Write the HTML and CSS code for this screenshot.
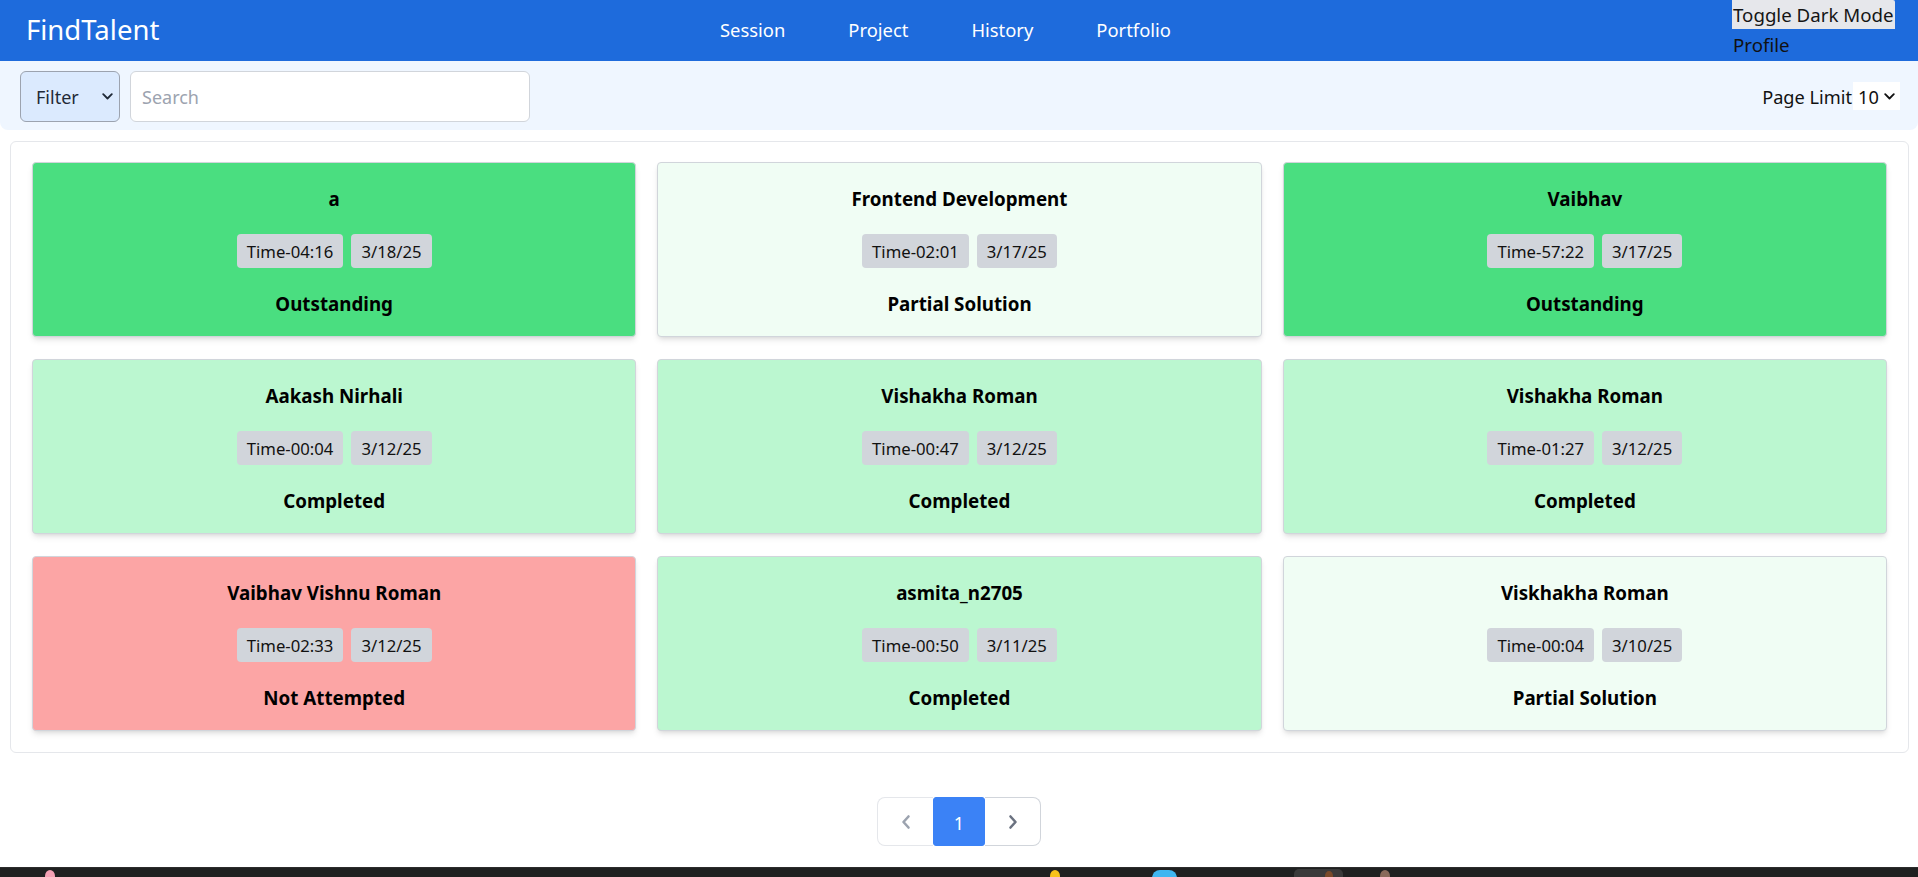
FILE: index.html
```html
<!DOCTYPE html>
<html lang="en">
<head>
<meta charset="utf-8">
<title>FindTalent</title>
<link rel="stylesheet" href="styles.css">
</head>
<body>
<header class="topbar">
  <div class="brand">FindTalent</div>
  <nav class="nav">
    <a class="nav-link" href="#">Session</a>
    <a class="nav-link" href="#">Project</a>
    <a class="nav-link" href="#">History</a>
    <a class="nav-link" href="#">Portfolio</a>
  </nav>
  <div class="account">
    <button class="theme-toggle" type="button">Toggle Dark Mode</button>
    <a class="profile" href="#">Profile</a>
  </div>
</header>

<section class="toolbar">
  <div class="search-group">
    <button class="filter" type="button">
      <span>Filter</span>
      <svg class="chev" width="11" height="7" viewBox="0 0 11 7"><path d="M1.2 1.2 L5.5 5.5 L9.8 1.2" fill="none" stroke="#1f2937" stroke-width="1.8" stroke-linecap="round" stroke-linejoin="round"/></svg>
    </button>
    <input class="search" type="text" placeholder="Search">
  </div>
  <div class="limit">
    <span class="limit-label">Page Limit</span>
    <button class="limit-select" type="button">
      <span>10</span>
      <svg class="chev" width="11" height="7" viewBox="0 0 11 7"><path d="M1.2 1.2 L5.5 5.5 L9.8 1.2" fill="none" stroke="#111" stroke-width="1.8" stroke-linecap="round" stroke-linejoin="round"/></svg>
    </button>
  </div>
</section>

<main class="board">
  <article class="card card-top">
    <h3 class="card-name">a</h3>
    <div class="tags"><span class="tag">Time-04:16</span><span class="tag">3/18/25</span></div>
    <p class="card-status">Outstanding</p>
  </article>
  <article class="card card-partial">
    <h3 class="card-name">Frontend Development</h3>
    <div class="tags"><span class="tag">Time-02:01</span><span class="tag">3/17/25</span></div>
    <p class="card-status">Partial Solution</p>
  </article>
  <article class="card card-top">
    <h3 class="card-name">Vaibhav</h3>
    <div class="tags"><span class="tag">Time-57:22</span><span class="tag">3/17/25</span></div>
    <p class="card-status">Outstanding</p>
  </article>

  <article class="card card-done">
    <h3 class="card-name">Aakash Nirhali</h3>
    <div class="tags"><span class="tag">Time-00:04</span><span class="tag">3/12/25</span></div>
    <p class="card-status">Completed</p>
  </article>
  <article class="card card-done">
    <h3 class="card-name">Vishakha Roman</h3>
    <div class="tags"><span class="tag">Time-00:47</span><span class="tag">3/12/25</span></div>
    <p class="card-status">Completed</p>
  </article>
  <article class="card card-done">
    <h3 class="card-name">Vishakha Roman</h3>
    <div class="tags"><span class="tag">Time-01:27</span><span class="tag">3/12/25</span></div>
    <p class="card-status">Completed</p>
  </article>

  <article class="card card-fail">
    <h3 class="card-name">Vaibhav Vishnu Roman</h3>
    <div class="tags"><span class="tag">Time-02:33</span><span class="tag">3/12/25</span></div>
    <p class="card-status">Not Attempted</p>
  </article>
  <article class="card card-done">
    <h3 class="card-name">asmita_n2705</h3>
    <div class="tags"><span class="tag">Time-00:50</span><span class="tag">3/11/25</span></div>
    <p class="card-status">Completed</p>
  </article>
  <article class="card card-partial">
    <h3 class="card-name">Viskhakha Roman</h3>
    <div class="tags"><span class="tag">Time-00:04</span><span class="tag">3/10/25</span></div>
    <p class="card-status">Partial Solution</p>
  </article>
</main>

<nav class="pager-wrap">
  <div class="pager">
    <button class="pg pg-prev" type="button" disabled>
      <svg width="12" height="16" viewBox="0 0 12 16"><path d="M8.5 2.5 L3.5 8 L8.5 13.5" fill="none" stroke="#9ca3af" stroke-width="2.6" stroke-linecap="round" stroke-linejoin="round"/></svg>
    </button>
    <button class="pg pg-active" type="button">1</button>
    <button class="pg pg-next" type="button">
      <svg width="12" height="16" viewBox="0 0 12 16"><path d="M3.5 2.5 L8.5 8 L3.5 13.5" fill="none" stroke="#6b7280" stroke-width="2.6" stroke-linecap="round" stroke-linejoin="round"/></svg>
    </button>
  </div>
</nav>

<div class="taskbar">
  <span class="tb-icon tb-pink"></span>
  <span class="tb-icon tb-yellow"></span>
  <span class="tb-icon tb-blue"></span>
  <span class="tb-icon tb-active"><span class="tb-brown"></span></span>
  <span class="tb-icon tb-tan"></span>
</div>
</body>
</html>
```
FILE: styles.css
```css
* { box-sizing: border-box; }

html, body {
  margin: 0;
  padding: 0;
  background: #ffffff;
  font-family: "Noto Sans", "Open Sans", sans-serif;
  color: #111111;
}

/* ---------- header ---------- */
.topbar {
  height: 61px;
  background: #1e6bdc;
  display: flex;
  align-items: center;
  padding: 0 23px 0 26px;
}
.brand {
  font-size: 27.5px;
  line-height: 36px;
  color: #ffffff;
  width: 133px;
  white-space: nowrap;
  margin-top: -1px;
}
.nav {
  display: flex;
  gap: 63px;
  margin-left: 561px;
  margin-top: -2px;
}
.nav-link {
  font-size: 18.4px;
  line-height: 26px;
  color: #ffffff;
  text-decoration: none;
  white-space: nowrap;
}
.account {
  margin-left: auto;
  align-self: flex-start;
  display: flex;
  flex-direction: column;
  align-items: flex-start;
}
.theme-toggle {
  font-family: inherit;
  font-size: 18.7px;
  line-height: 29px;
  height: 29px;
  padding: 0 1px;
  border: 0;
  border-radius: 0 2px 0 0;
  background: #e6e7eb;
  color: #151515;
  white-space: nowrap;
  width: 163px;
  text-align: left;
}
.profile {
  font-size: 18.7px;
  line-height: 30px;
  padding-top: 1px;
  color: #111111;
  text-decoration: none;
  padding-left: 1px;
}

/* ---------- toolbar ---------- */
.toolbar {
  height: 69px;
  background: #eff6ff;
  border-radius: 0 0 8px 8px;
  display: flex;
  align-items: center;
  justify-content: space-between;
  padding: 0 18px 0 20px;
}
.search-group {
  display: flex;
  align-items: center;
  gap: 10px;
  margin-top: 1px;
}
.filter {
  width: 100px;
  height: 51px;
  display: flex;
  align-items: center;
  justify-content: space-between;
  padding: 2px 6px 0 15px;
  background: #dbeafe;
  border: 1px solid #9ca3af;
  border-radius: 6px;
  font-family: inherit;
  font-size: 18px;
  color: #1f2937;
}
.filter .chev { margin-top: -1px; }
.search {
  width: 400px;
  height: 51px;
  padding: 2px 11px 0;
  border: 1px solid #d1d5db;
  border-radius: 6px;
  background: #ffffff;
  font-family: inherit;
  font-size: 18px;
  color: #111;
  outline: none;
}
.search::placeholder { color: #9ca3af; }
.limit {
  display: flex;
  align-items: center;
  margin-top: 1px;
}
.limit-label {
  font-size: 18.2px;
  line-height: 26px;
  padding-top: 1px;
  color: #111111;
  white-space: nowrap;
}
.limit-select {
  width: 47px;
  height: 28px;
  margin-left: 1px;
  display: flex;
  align-items: center;
  justify-content: space-between;
  padding: 1px 5px 0 5px;
  background: #ffffff;
  border: 0;
  font-family: inherit;
  font-size: 18.2px;
  color: #111111;
}

/* ---------- cards ---------- */
.board {
  margin: 11px 9px 0 10px;
  padding: 20px 21px 21px 21px;
  border: 1px solid #e5e7eb;
  border-radius: 6px;
  background: #ffffff;
  display: grid;
  grid-template-columns: repeat(3, 1fr);
  gap: 22px 21px;
}
.card {
  height: 175px;
  border: 1px solid #d1d5db;
  border-radius: 4px;
  padding: 22px 12px 17px;
  box-shadow: 0 4px 6px -1px rgba(0, 0, 0, 0.1), 0 2px 4px -2px rgba(0, 0, 0, 0.1);
  display: flex;
  flex-direction: column;
  align-items: center;
  text-align: center;
}
.card-top { background: #4ade80; }
.card-partial { background: #f0fdf4; }
.card-done { background: #bbf7d0; }
.card-fail { background: #fca5a5; }

.card-name,
.card-status {
  margin: 0;
  font-size: 18.75px;
  line-height: 28px;
  font-weight: 700;
  color: #000000;
  white-space: nowrap;
}
.tags {
  display: flex;
  gap: 8px;
  margin-top: 21px;
}
.tag {
  height: 34px;
  line-height: 35px;
  padding: 0 10px;
  border-radius: 4px;
  background: #d1d5db;
  font-size: 16.7px;
  color: #111111;
  white-space: nowrap;
}
.card-status { margin-top: 22px; }

/* ---------- pagination ---------- */
.pager-wrap {
  display: flex;
  justify-content: center;
  margin-top: 44px;
}
.pager {
  display: flex;
  height: 49px;
}
.pg {
  width: 53px;
  height: 49px;
  display: flex;
  align-items: center;
  justify-content: center;
  background: #ffffff;
  border: 1px solid #d1d5db;
  font-family: inherit;
  font-size: 18px;
  padding: 0;
}
.pg-prev {
  width: 56px;
  border-radius: 8px 0 0 8px;
  border-color: #e5e7eb;
  border-right: 0;
}
.pg-active {
  background: #3b82f6;
  border-color: #3b82f6;
  color: #ffffff;
  border-radius: 3px;
  width: 52px;
  padding-top: 2px;
}
.pg-next {
  width: 56px;
  border-radius: 0 8px 8px 0;
  border-left: 0;
}

/* ---------- OS taskbar strip ---------- */
.taskbar {
  position: fixed;
  left: 0;
  right: 0;
  bottom: 0;
  height: 10px;
  background: #1f2020;
  border-top: 1px solid #2c2c2c;
  overflow: hidden;
}
.tb-icon {
  position: absolute;
  top: 2px;
  border-radius: 50%;
}
.tb-pink { left: 45px; width: 10px; height: 12px; background: #f4a0b4; }
.tb-yellow { left: 1050px; width: 10px; height: 12px; background: #f7c21a; }
.tb-blue { left: 1152px; width: 25px; height: 12px; background: #3fb6f0; border-radius: 8px 8px 0 0; }
.tb-active { left: 1294px; top: 1px; width: 49px; height: 14px; background: #3a3a3a; border-radius: 5px; }
.tb-brown { position: absolute; left: 31px; top: 2px; width: 8px; height: 10px; border-radius: 50%; background: #7a4a2a; }
.tb-tan { left: 1380px; width: 10px; height: 12px; background: #8a6a5a; }
```
